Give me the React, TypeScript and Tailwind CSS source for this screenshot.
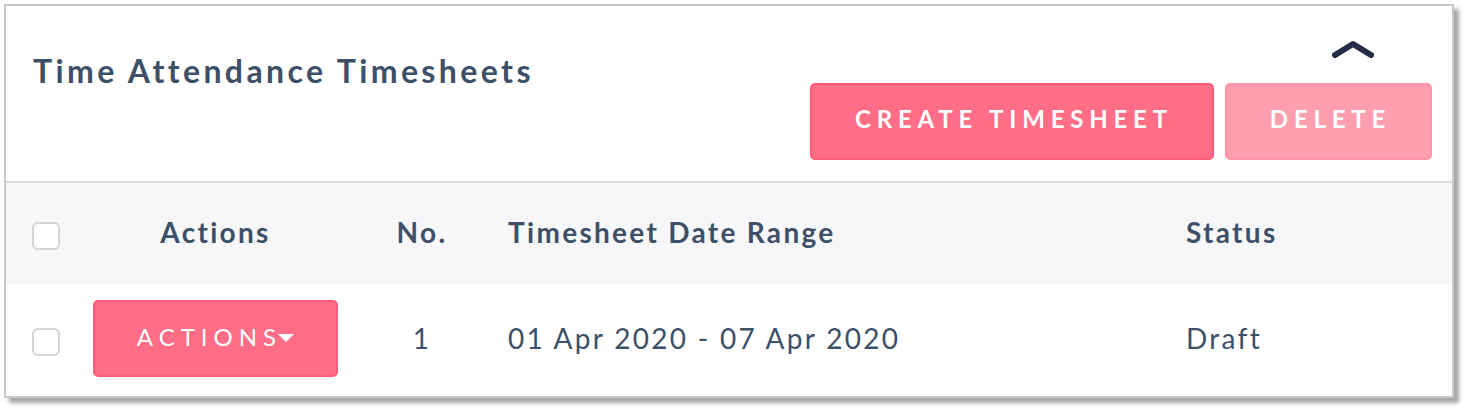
const font = { fontFamily: "Lato, 'Open Sans', sans-serif" };

const Checkbox = () => (
  <span className="block w-[28px] h-[28px] rounded-[6px] border-2 border-[#d4d4d4] bg-white" />
);

const App = () => {
  return (
    <div className="w-[1466px] h-[412px] bg-white pt-[4px] pl-[4px]" style={font}>
      <div className="w-[1450px] h-[394px] border-2 border-[#c9c9c9] bg-white shadow-[5px_5px_4px_rgba(0,0,0,0.35)] flex flex-col">
        {/* header */}
        <div className="h-[177px] flex justify-between border-b-2 border-[#dcdcdc]">
          <h2 className="pl-[27px] pt-[41px] text-[32px] leading-[48px] font-bold tracking-[3.4px] text-[#3d5068]">
            Time Attendance Timesheets
          </h2>
          <div className="flex flex-col items-end pr-[20px] pt-[34px]">
            <svg width="44" height="19" viewBox="0 0 44 19" className="mr-[57px]">
              <path
                d="M4 15 L22 4 L40 15"
                fill="none"
                stroke="#232b45"
                strokeWidth="6"
                strokeLinecap="round"
                strokeLinejoin="round"
              />
            </svg>
            <div className="flex gap-[11px] mt-[24px]">
              <button className="w-[404px] h-[77px] rounded-[5px] bg-[#ff6e86] border-2 border-[#ff5d79] text-white text-[24px] font-bold tracking-[5.8px] pl-[4px] pb-[5px]">
                CREATE TIMESHEET
              </button>
              <button className="w-[207px] h-[77px] rounded-[5px] bg-[#ff9eae] border-2 border-[#ff95a7] text-white text-[24px] font-bold tracking-[5.8px] pl-[4px] pb-[5px]">
                DELETE
              </button>
            </div>
          </div>
        </div>

        {/* table head */}
        <div className="h-[101px] bg-[#f7f7f9] grid grid-cols-[74px_271px_142px_679px_1fr] items-center text-[28px] font-bold tracking-[2.3px] text-[#3d5068]">
          <div className="pl-[26px] pt-[4px]">
            <Checkbox />
          </div>
          <div className="text-center pb-[4px]">Actions</div>
          <div className="text-center pb-[4px]">No.</div>
          <div className="pl-[15px] pb-[4px]">Timesheet Date Range</div>
          <div className="pl-[14px] pb-[4px]">Status</div>
        </div>

        {/* row */}
        <div className="flex-1 grid grid-cols-[74px_271px_142px_679px_1fr] items-center text-[28px] tracking-[2.3px] text-[#3d5068]">
          <div className="pl-[26px] pt-[4px]">
            <Checkbox />
          </div>
          <div className="flex justify-center pb-[4px]">
            <button className="w-[245px] h-[77px] rounded-[5px] bg-[#ff6e86] border-2 border-[#ff5d79] text-white text-[24px] tracking-[6px] flex items-center justify-center pb-[2px]">
              ACTIONS
              <span className="ml-[-4px] mt-[2px] w-0 h-0 border-l-[8px] border-r-[8px] border-t-[8px] border-l-transparent border-r-transparent border-t-white" />
            </button>
          </div>
          <div className="text-center pb-[5px]">1</div>
          <div className="pl-[15px] pb-[5px]">01 Apr 2020 - 07 Apr 2020</div>
          <div className="pl-[14px] pb-[5px]">Draft</div>
        </div>
      </div>
    </div>
  );
};

export default App;
